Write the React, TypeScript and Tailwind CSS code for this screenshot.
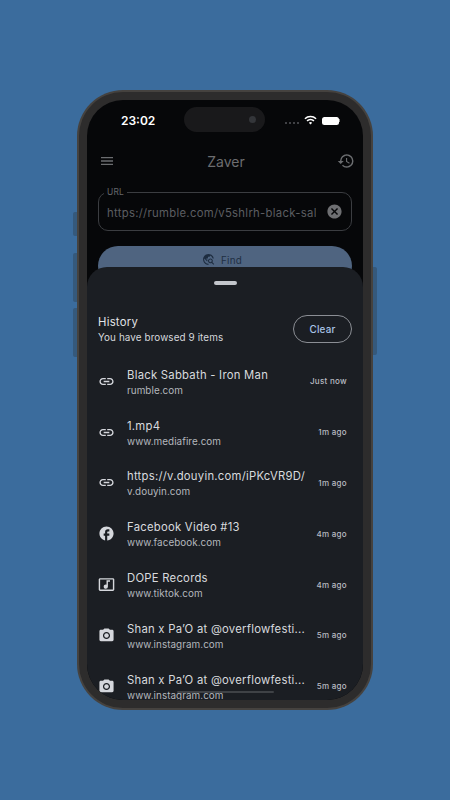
import { FC, ReactNode } from 'react';
import { MdMenu, MdHistory, MdCancel, MdLink, MdFacebook, MdMusicVideo, MdCameraAlt, MdTravelExplore } from 'react-icons/md';

interface HistoryItem {
  icon: ReactNode;
  title: string;
  host: string;
  time: string;
}

const iconClass = 'w-[17px] h-[17px] shrink-0 text-[#d5d7dc]';

const items: HistoryItem[] = [
  { icon: <MdLink className={iconClass} />, title: 'Black Sabbath - Iron Man', host: 'rumble.com', time: 'Just now' },
  { icon: <MdLink className={iconClass} />, title: '1.mp4', host: 'www.mediafire.com', time: '1m ago' },
  { icon: <MdLink className={iconClass} />, title: 'https://v.douyin.com/iPKcVR9D/', host: 'v.douyin.com', time: '1m ago' },
  { icon: <MdFacebook className={iconClass} />, title: 'Facebook Video #13', host: 'www.facebook.com', time: '4m ago' },
  { icon: <MdMusicVideo className={iconClass} />, title: 'DOPE Records', host: 'www.tiktok.com', time: '4m ago' },
  { icon: <MdCameraAlt className={iconClass} />, title: 'Shan x Pa’O at @overflowfesti...', host: 'www.instagram.com', time: '5m ago' },
  { icon: <MdCameraAlt className={iconClass} />, title: 'Shan x Pa’O at @overflowfesti...', host: 'www.instagram.com', time: '5m ago' },
];

const Row: FC<{ item: HistoryItem }> = ({ item }) => (
  <div className="flex items-center h-[50.8px] shrink-0 pl-[11px] pr-[16px]">
    {item.icon}
    <div className="ml-[12px] mt-[1px] min-w-0 w-[180px]">
      <div className="text-[11.3px] leading-[16px] tracking-[0.25px] text-[#d8dade] whitespace-nowrap">{item.title}</div>
      <div className="text-[9.9px] leading-[14px] tracking-[0.05px] text-[#b4b7bd] whitespace-nowrap">{item.host}</div>
    </div>
    <div className="ml-auto text-[8px] font-medium tracking-[0.3px] text-[#b9bcc2] whitespace-nowrap">{item.time}</div>
  </div>
);

const SideButton: FC<{ className: string }> = ({ className }) => (
  <div className={`w-[4px] bg-[#35597c] ${className}`} />
);

export default function App() {
  return (
    <div className="w-[450px] h-[800px] bg-[#3b6c9d] flex items-start justify-center pt-[90px] font-['Inter',sans-serif] overflow-hidden">
      <div className="flex flex-col gap-[6px] pt-[122px]">
        <SideButton className="h-[24px] rounded-l-[2px] mb-[11px]" />
        <SideButton className="h-[49px] rounded-l-[2px]" />
        <SideButton className="h-[49px] rounded-l-[2px]" />
      </div>

      <div className="w-[296px] h-[620px] shrink-0 rounded-[46px] bg-[#45423f] p-[2px]">
        <div className="h-full rounded-[44px] bg-[#2d2c2c] p-[8px]">
          <div className="relative h-full rounded-[36px] bg-[#060709] overflow-hidden">
            {/* status bar */}
            <div className="flex items-center justify-between h-[40px] pl-[34px] pr-[23px] pt-[1px]">
              <span className="text-[12px] font-semibold text-white">23:02</span>
              <div className="flex items-center">
                <div className="flex gap-[2px] mr-[5px] mt-[4px]">
                  <i className="w-[2px] h-[2px] rounded-full bg-[#55565a]" />
                  <i className="w-[2px] h-[2px] rounded-full bg-[#55565a]" />
                  <i className="w-[2px] h-[2px] rounded-full bg-[#55565a]" />
                  <i className="w-[2px] h-[2px] rounded-full bg-[#55565a]" />
                </div>
                <svg viewBox="0 0 14 10" className="w-[13px] h-[10px] mr-[5px] -mt-[2px]" fill="none" stroke="#fff" strokeWidth="1.7">
                  <path d="M1 3.6a8.6 8.6 0 0 1 12 0" />
                  <path d="M3.3 6a5.4 5.4 0 0 1 7.4 0" />
                  <path d="M7 9.8 5.2 8a2.6 2.6 0 0 1 3.6 0Z" fill="#fff" stroke="none" />
                </svg>
                <div className="w-[17px] h-[8px] rounded-[2.5px] bg-white" />
                <div className="w-[1px] h-[3px] bg-[#8a8a8a]" />
              </div>
            </div>
            <div className="absolute top-[7px] left-[97px] w-[81px] h-[25px] rounded-full bg-[#19191b] flex items-center justify-end pr-[9px]">
              <div className="w-[7px] h-[7px] rounded-full bg-[#34363a]" />
            </div>

            {/* app bar */}
            <div className="flex items-center justify-between h-[42px] pl-[12px] pr-[8px]">
              <MdMenu className="w-[16px] h-[16px] text-[#6b6d70]" />
              <span className="text-[14px] text-[#6c6d70]">Zaver</span>
              <MdHistory className="w-[18px] h-[18px] text-[#6b6d70]" />
            </div>

            {/* url field */}
            <div className="relative mx-[11px] mt-[10px] h-[39px] rounded-[10px] border border-[#3b3d41] flex items-center pl-[8px] pr-[8px]">
              <span className="absolute -top-[6px] left-[5px] px-[3px] bg-[#060709] text-[8.4px] leading-[11px] tracking-[0.2px] text-[#66686c]">URL</span>
              <span className="w-[209px] pt-[3px] overflow-hidden whitespace-nowrap text-[11.3px] tracking-[0.3px] text-[#5c5e62]">https://rumble.com/v5shlrh-black-sal</span>
              <MdCancel className="ml-auto w-[17px] h-[17px] text-[#6e6f72]" />
            </div>

            {/* find */}
            <div className="mx-[11px] mt-[15px] h-[40px] rounded-[20px] bg-[#4f6480] flex justify-center pt-[7px] pr-[6px] gap-[6px]">
              <MdTravelExplore className="w-[13px] h-[13px] text-[#1d2c3f]" />
              <span className="text-[9.9px] leading-[14px] tracking-[0.2px] text-[#1f2f43]">Find</span>
            </div>

            {/* bottom sheet */}
            <div className="absolute inset-x-0 top-[167px] bottom-0 rounded-t-[20px] bg-[#1b1e23] flex flex-col overflow-hidden">
              <div className="w-[23px] h-[3.5px] shrink-0 rounded-full bg-[#c3c6cb] mx-auto mt-[14px]" />
              <div className="flex items-center justify-between shrink-0 pl-[11px] pr-[11px] mt-[29px]">
                <div>
                  <div className="text-[11.3px] leading-[16px] tracking-[0.25px] text-[#e2e4e8]">History</div>
                  <div className="text-[9.9px] leading-[15px] tracking-[0.1px] text-[#d6d8dc]">You have browsed 9 items</div>
                </div>
                <div className="w-[59px] h-[28px] rounded-full border border-[#8b8e94] flex items-center justify-center text-[9.9px] font-medium tracking-[0.15px] text-[#a8c3e6]">Clear</div>
              </div>
              <div className="mt-[11.5px] flex flex-col">
                {items.map((item, i) => (
                  <Row key={i} item={item} />
                ))}
              </div>
            </div>

            <div className="absolute bottom-[7px] left-[90px] w-[97px] h-[2.5px] rounded-full bg-[#3f4246]" />
          </div>
        </div>
      </div>

      <div className="pt-[177px]">
        <SideButton className="h-[88px] rounded-r-[2px]" />
      </div>
    </div>
  );
}
